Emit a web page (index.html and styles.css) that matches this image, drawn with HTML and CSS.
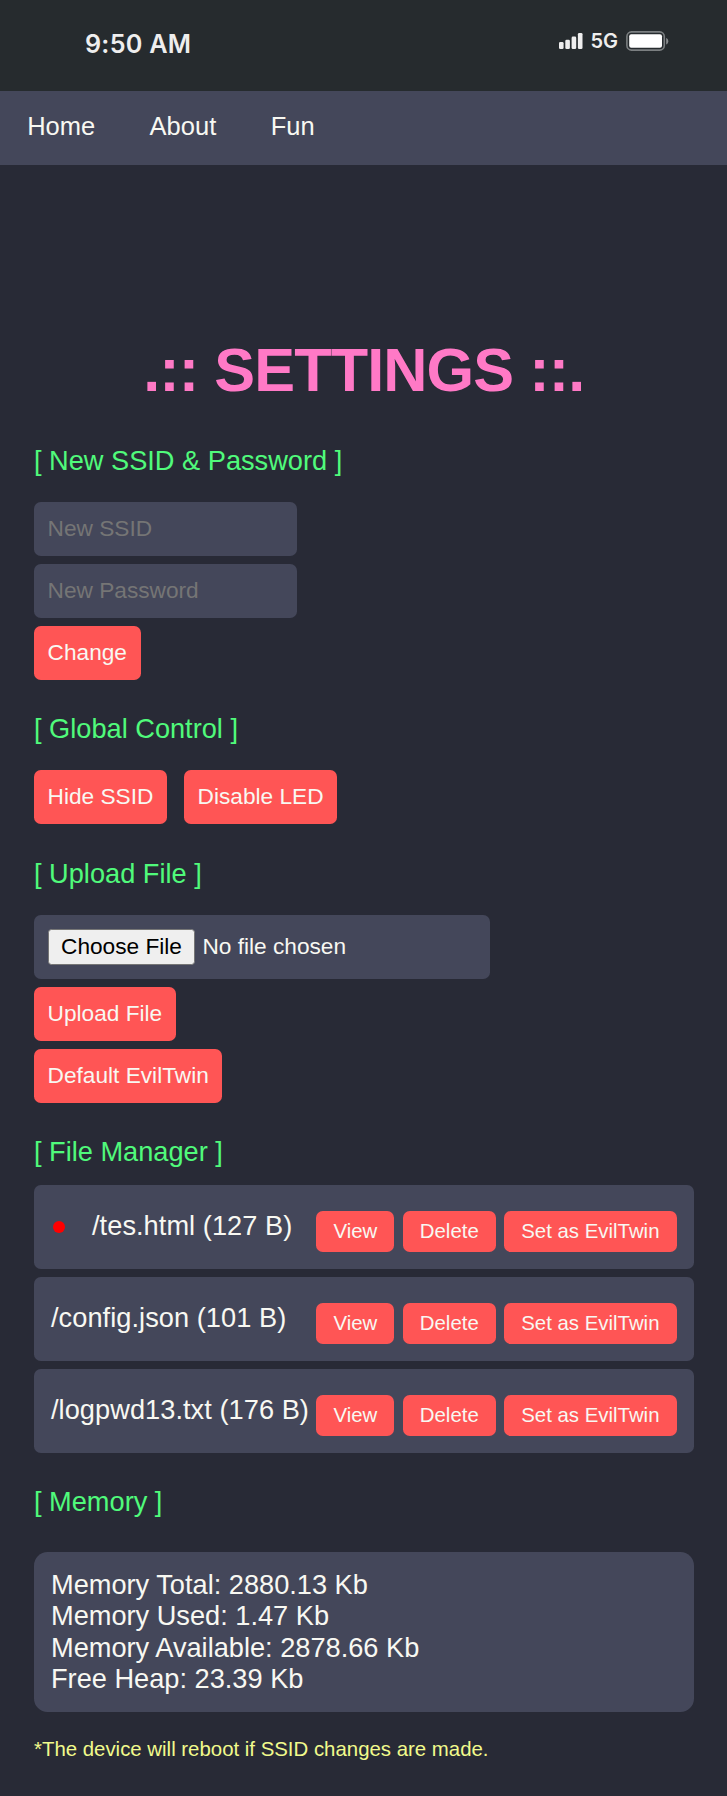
FILE: index.html
```html
<!DOCTYPE html>
<html lang="en">
<head>
<meta charset="utf-8">
<title>Settings</title>
<link rel="stylesheet" href="styles.css">
</head>
<body>
<header class="status">
  <span class="time">9:50 AM</span>
  <div class="indicators">
    <svg class="signal" width="24" height="16" viewBox="0 0 24 16" fill="#eee"><rect x="0" y="9" width="4.6" height="7" rx="1.3"/><rect x="6.3" y="6.8" width="4.6" height="9.2" rx="1.3"/><rect x="12.6" y="3.6" width="4.6" height="12.4" rx="1.3"/><rect x="18.9" y="0" width="4.6" height="16" rx="1.3"/></svg>
    <span class="network">5G</span>
    <svg class="battery" width="43" height="20" viewBox="0 0 43 20"><rect x=".9" y=".9" width="37.4" height="18.2" rx="4.6" fill="none" stroke="#7b7f81" stroke-width="1.6"/><rect x="3.2" y="3.2" width="32.8" height="13.6" rx="2" fill="#fff"/><path d="M40.2 7v6.4c1.3-.6 2.1-1.8 2.1-3.2s-.8-2.6-2.1-3.2z" fill="#8b8e90"/></svg>
  </div>
</header>
<nav class="nav"><a>Home</a><a>About</a><a>Fun</a></nav>
<main class="content">
  <h1 class="title">.:: SETTINGS ::.</h1>

  <h2 class="heading">[ New SSID &amp; Password ]</h2>
  <form class="stack">
    <input class="field" type="text" placeholder="New SSID">
    <input class="field" type="text" placeholder="New Password">
    <button class="btn" type="button">Change</button>
  </form>

  <h2 class="heading">[ Global Control ]</h2>
  <div class="controls">
    <button class="btn" type="button">Hide SSID</button>
    <button class="btn" type="button">Disable LED</button>
  </div>

  <h2 class="heading upload-heading">[ Upload File ]</h2>
  <div class="stack">
    <div class="picker"><button class="choose" type="button">Choose File</button><span>No file chosen</span></div>
    <button class="btn" type="button">Upload File</button>
    <button class="btn" type="button">Default EvilTwin</button>
  </div>

  <h2 class="heading manager">[ File Manager ]</h2>
  <ul class="files">
    <li class="file"><i class="dot"></i><span class="name">/tes.html (127 B)</span><div class="actions"><button class="act">View</button><button class="act">Delete</button><button class="act">Set as EvilTwin</button></div></li>
    <li class="file"><span class="name">/config.json (101 B)</span><div class="actions"><button class="act">View</button><button class="act">Delete</button><button class="act">Set as EvilTwin</button></div></li>
    <li class="file"><span class="name">/logpwd13.txt (176 B)</span><div class="actions"><button class="act">View</button><button class="act">Delete</button><button class="act">Set as EvilTwin</button></div></li>
  </ul>

  <h2 class="heading memory-heading">[ Memory ]</h2>
  <div class="memory">
    <div>Memory Total: 2880.13 Kb</div>
    <div>Memory Used: 1.47 Kb</div>
    <div>Memory Available: 2878.66 Kb</div>
    <div>Free Heap: 23.39 Kb</div>
  </div>
  <p class="note">*The device will reboot if SSID changes are made.</p>
</main>
</body>
</html>
```

FILE: styles.css
```css
* { box-sizing: border-box; }
body {
  margin: 0;
  min-height: 1796px;
  background: #282a36;
  color: #f8f8f2;
  font-family: "Liberation Sans", Arial, sans-serif;
  font-size: 27.2px;
}
button, input { font-family: inherit; margin: 0; }

.status {
  height: 91px;
  padding: 27px 58px 0 85px;
  display: flex;
  justify-content: space-between;
  background: #262b2e;
  color: #eee;
  font-family: Inter, sans-serif;
  font-weight: 600;
}
.time { padding-top: 1px; font-size: 25.2px; line-height: 32px; letter-spacing: 0.25px; }
.indicators { display: flex; height: 28px; }
.signal { margin: 6px 7.5px 0 0; }
.network { width: 35.5px; font-size: 20px; line-height: 28px; }
.battery { margin-top: 4px; }

.nav {
  height: 74px;
  padding: 20px 0 0 27.2px;
  display: flex;
  gap: 54.4px;
  background: #44475a;
  font-size: 25.5px;
  line-height: 30px;
}

.content { padding: 165px 33.5px 0 34px; }
.title {
  margin: 0;
  height: 80px;
  text-align: center;
  color: #ff79c6;
  font-size: 61.2px;
  line-height: 80px;
  letter-spacing: -0.9px;
}
.heading {
  margin: 33.5px 0 25px;
  color: #50fa7b;
  font-weight: 400;
  font-size: 27.2px;
  line-height: 32px;
}
.title + .heading { margin-top: 35px; }

.stack { display: flex; flex-direction: column; align-items: flex-start; gap: 8.5px; }
.field, .btn {
  height: 53.5px;
  padding: 0 13.6px;
  border: 0;
  border-radius: 6.8px;
  font-size: 22.67px;
}
.field { width: 263.4px; background: #44475a; color: #f8f8f2; }
.field::placeholder { color: #757575; opacity: 1; }
.btn { background: #ff5555; color: #f8f8f2; white-space: nowrap; }
.controls { display: flex; gap: 17px; }

.heading.upload-heading { margin-top: 34.2px; }
.picker {
  width: 456.4px;
  height: 64px;
  padding: 0 14px;
  display: flex;
  align-items: center;
  gap: 7.5px;
  border-radius: 6.8px;
  background: #44475a;
  font-size: 22.67px;
}
.choose {
  width: 147px;
  height: 36px;
  padding: 0;
  border: 1.7px solid #767676;
  border-radius: 3.4px;
  background: #efefef;
  color: #000;
  font-size: 22.67px;
}

.heading.manager { margin: 33.2px 0 17.4px; }
.files { margin: 0; padding: 0; list-style: none; display: grid; gap: 8.5px; }
.file {
  height: 83.5px;
  padding: 25px 17px 0;
  display: flex;
  border-radius: 6.8px;
  background: #44475a;
}
.dot { width: 12px; height: 12px; margin: 11px 27px 0 2px; border-radius: 50%; background: #f00; }
.name { line-height: 32px; letter-spacing: 0.05px; white-space: nowrap; }
.actions { display: flex; gap: 8.5px; margin-left: auto; padding-top: 0.6px; }
.act {
  height: 41px;
  padding: 0 17px;
  border: 0;
  border-radius: 6.8px;
  background: #ff5555;
  color: #f8f8f2;
  font-size: 20.4px;
  white-space: nowrap;
}

.heading.memory-heading { margin-bottom: 33.5px; }
.memory {
  height: 160px;
  padding: 17px;
  border-radius: 13.6px;
  background: #44475a;
  line-height: 31.5px;
}
.note { margin: 25.5px 0 0; color: #f1fa8c; font-size: 20.4px; line-height: 24px; }
```
